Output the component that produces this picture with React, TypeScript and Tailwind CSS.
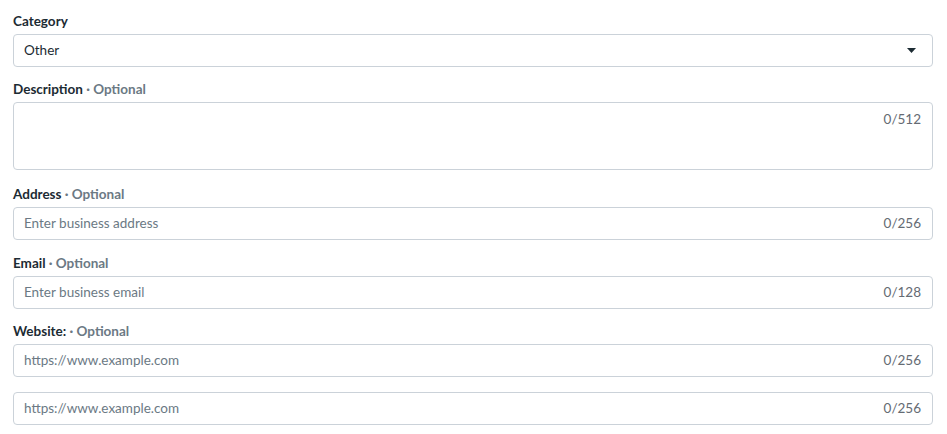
const font = { fontFamily: "Lato, 'Noto Sans', sans-serif" };

function Label({ name, optional }: { name: string; optional?: boolean }) {
  return (
    <div className="mb-[5px] h-4 text-[13.5px] leading-4 font-bold text-[#1c2b33]">
      {name}
      {optional && <span className="text-[#6b7984]"> · Optional</span>}
    </div>
  );
}

function TextInput({ placeholder, max }: { placeholder: string; max: number }) {
  return (
    <div className="flex h-[33px] items-center rounded-[4px] border border-[#cbd2d9] bg-white pr-[11px] pl-[10px]">
      <span className="flex-1 text-[13.5px] text-[#6b7984]">{placeholder}</span>
      <span className="text-[13.5px] text-[#656b73]">0/{max}</span>
    </div>
  );
}

export default function App() {
  return (
    <div className="min-h-screen bg-white pt-[13px] pr-[14px] pl-[13px]" style={font}>
      <Label name="Category" />
      <div className="flex h-[33px] items-center rounded-[4px] border border-[#cbd2d9] bg-white pr-[16px] pl-[10px]">
        <span className="flex-1 text-[13.5px] text-[#1c2b33]">Other</span>
        <svg width="9" height="5" viewBox="0 0 9 5">
          <path d="M0 0h9L4.5 5z" fill="#1c2b33" />
        </svg>
      </div>

      <div className="mt-[14px]">
        <Label name="Description" optional />
        <div className="flex h-[68px] justify-end rounded-[4px] border border-[#cbd2d9] bg-white pt-[6px] pr-[11px]">
          <span className="text-[13.5px] text-[#656b73]">0/512</span>
        </div>
      </div>

      <div className="mt-[16px]">
        <Label name="Address" optional />
        <TextInput placeholder="Enter business address" max={256} />
      </div>

      <div className="mt-[15px]">
        <Label name="Email" optional />
        <TextInput placeholder="Enter business email" max={128} />
      </div>

      <div className="mt-[14px]">
        <div className="mb-[5px] h-4 text-[13.5px] leading-4 font-bold text-[#1c2b33]">
          Website: <span className="text-[#6b7984]">· Optional</span>
        </div>
        <TextInput placeholder="https://www.example.com" max={256} />
        <div className="mt-[15px]">
          <TextInput placeholder="https://www.example.com" max={256} />
        </div>
      </div>
    </div>
  );
}
